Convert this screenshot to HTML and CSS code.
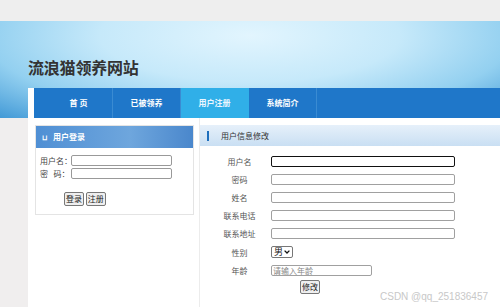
FILE: index.html
```html
<!DOCTYPE html>
<html lang="zh">
<head>
    <meta charset="UTF-8">
    <title>流浪猫领养网站</title>
    <link rel="stylesheet" href="styles.css">
</head>
<body>
    <div class="top"></div>

    <div class="banner">
        <h1>流浪猫领养网站</h1>
        <div class="nav-wrap">
            <ul class="nav">
                <li class="first">首 页</li>
                <li>已被领养</li>
                <li class="active">用户注册</li>
                <li>系统简介</li>
            </ul>
        </div>
    </div>

    <div class="main">
        <!-- 左侧：用户登录 -->
        <div class="side">
            <div class="box">
                <div class="box-head"><span class="ico">⊔</span>用户登录</div>
                <div class="login">
                    <div class="row"><span>用户名：</span><input type="text"></div>
                    <div class="row"><span>密&nbsp;&nbsp;&nbsp;码：</span><input type="password"></div>
                    <div class="btns">
                        <button type="button">登录</button>
                        <button type="button">注册</button>
                    </div>
                </div>
            </div>
        </div>

        <!-- 右侧：用户信息修改 -->
        <div class="content">
            <div class="content-head"><span class="bar"></span>用户信息修改</div>
            <form class="info">
                <label>用户名</label><input type="text" class="focus">
                <label>密码</label><input type="password">
                <label>姓名</label><input type="text">
                <label>联系电话</label><input type="text">
                <label>联系地址</label><input type="text">
                <label>性别</label>
                <div><select><option>男</option><option>女</option></select></div>
                <label>年龄</label><input type="text" class="age" placeholder="请输入年龄">
                <div></div><div class="submit"><button type="button">修改</button></div>
            </form>
        </div>
    </div>

    <div class="mark">CSDN @qq_251836457</div>
</body>
</html>
```

FILE: styles.css
```css
body {
    margin: 0;
    background-color: #f0eeee;
    font-family: "Noto Sans CJK SC", "Liberation Sans", sans-serif;
    font-size: 8px;
    color: #444;
    overflow: hidden;
    height: 307px;
}
.top {
    height: 21px;
    background-color: #eeeeee;
}
.banner {
    height: 97px;
    background: radial-gradient(ellipse 75% 120% at 50% 15%, #e2f5fe 0%, #c6e9fa 40%, #93d0f0 70%, #3a94d4 100%);
}
.banner h1 {
    margin: 0;
    padding: 35px 0 0 28px;
    height: 32px;
    font-size: 16px;
    line-height: 22px;
    font-weight: bold;
    color: #333;
    letter-spacing: -0.2px;
}
.nav-wrap {
    margin-left: 28px;
    padding-left: 6px;
    background-color: #fff;
}
.nav {
    display: flex;
    margin: 0;
    padding: 0 0 0 11px;
    list-style: none;
    height: 30px;
    background-color: #1f77c9;
}
.nav li {
    width: 67px;
    line-height: 30px;
    text-align: center;
    color: #fff;
    font-weight: bold;
    font-size: 8px;
    border-right: 1px solid #3a8bd2;
}
.nav li.first {
    margin-left: -11px;
    padding-left: 11px;
}
.nav li.active {
    background-color: #30afe8;
    color: #eaf6ff;
    border-right-color: #30afe8;
}
.main {
    display: flex;
    margin-left: 28px;
    height: 189px;
    background-color: #fff;
}
.side {
    width: 164px;
    padding: 7px 0 0 7px;
    border-right: 1px solid #ececec;
}
.box {
    width: 157px;
    height: 88px;
    border: 1px solid #e4e4e4;
}
.box-head {
    height: 22px;
    line-height: 22px;
    padding-left: 6px;
    color: #fff;
    font-weight: bold;
    background: linear-gradient(to right, #4f8fd4, #6ea6dd 60%, #4a87cc);
}
.box-head .ico {
    margin-right: 6px;
    font-size: 7px;
}
.login {
    padding: 6px 0 0 4px;
}
.login .row {
    display: flex;
    align-items: center;
    height: 13px;
}
.login .row span {
    width: 31px;
    white-space: nowrap;
}
.login input {
    width: 99px;
    height: 9px;
    padding: 0;
    border: 1px solid #999;
    border-radius: 2px;
}
.btns {
    padding: 12px 0 0 24px;
}
button {
    font-family: inherit;
    font-size: 8px;
    padding: 0 1px;
    height: 14px;
    line-height: 12px;
    border: 1px solid #777;
    border-radius: 2px;
    background-color: #efefef;
    color: #222;
}
.content {
    flex: 1;
    padding-top: 7px;
}
.content-head {
    display: flex;
    align-items: center;
    height: 21px;
    padding-left: 7px;
    color: #333;
    background: linear-gradient(to bottom, #e6f0fa, #c9dff3);
}
.content-head .bar {
    width: 2px;
    height: 10px;
    margin-right: 12px;
    background-color: #1f6fbd;
}
.info {
    display: grid;
    grid-template-columns: 61px 184px;
    row-gap: 7px;
    padding: 10px 0 0 9px;
    align-items: center;
}
.info label {
    text-align: center;
    color: #555;
    line-height: 11px;
}
.info input {
    margin-left: 1px;
    width: 184px;
    height: 11px;
    padding: 0;
    box-sizing: border-box;
    border: 1px solid #a0a0a0;
    border-radius: 2px;
}
.info input.focus {
    border: 1.5px solid #111;
}
.info input.age {
    width: 101px;
    padding-left: 1px;
    font-family: inherit;
    font-size: 8px;
}
.info input::placeholder {
    color: #888;
}
.info select {
    display: block;
    -webkit-appearance: none;
    appearance: none;
    margin-left: 1px;
    width: 22px;
    height: 12px;
    box-sizing: border-box;
    font-size: 9px;
    line-height: 10px;
    padding: 0 0 0 2px;
    border: 1px solid #777;
    border-radius: 2px;
    font-family: inherit;
    color: #111;
    background: #fff url("data:image/svg+xml,%3Csvg xmlns='http://www.w3.org/2000/svg' width='6' height='4' viewBox='0 0 6 4'%3E%3Cpath d='M0.6 0.6L3 3L5.4 0.6' fill='none' stroke='%23111' stroke-width='1.3'/%3E%3C/svg%3E") no-repeat right 2px center;
}
.submit {
    margin-top: -3px;
    padding-left: 30px;
}
.mark {
    position: absolute;
    left: 380px;
    top: 291px;
    font-family: "Liberation Sans", sans-serif;
    font-size: 10px;
    color: #c8c8c8;
}
```
